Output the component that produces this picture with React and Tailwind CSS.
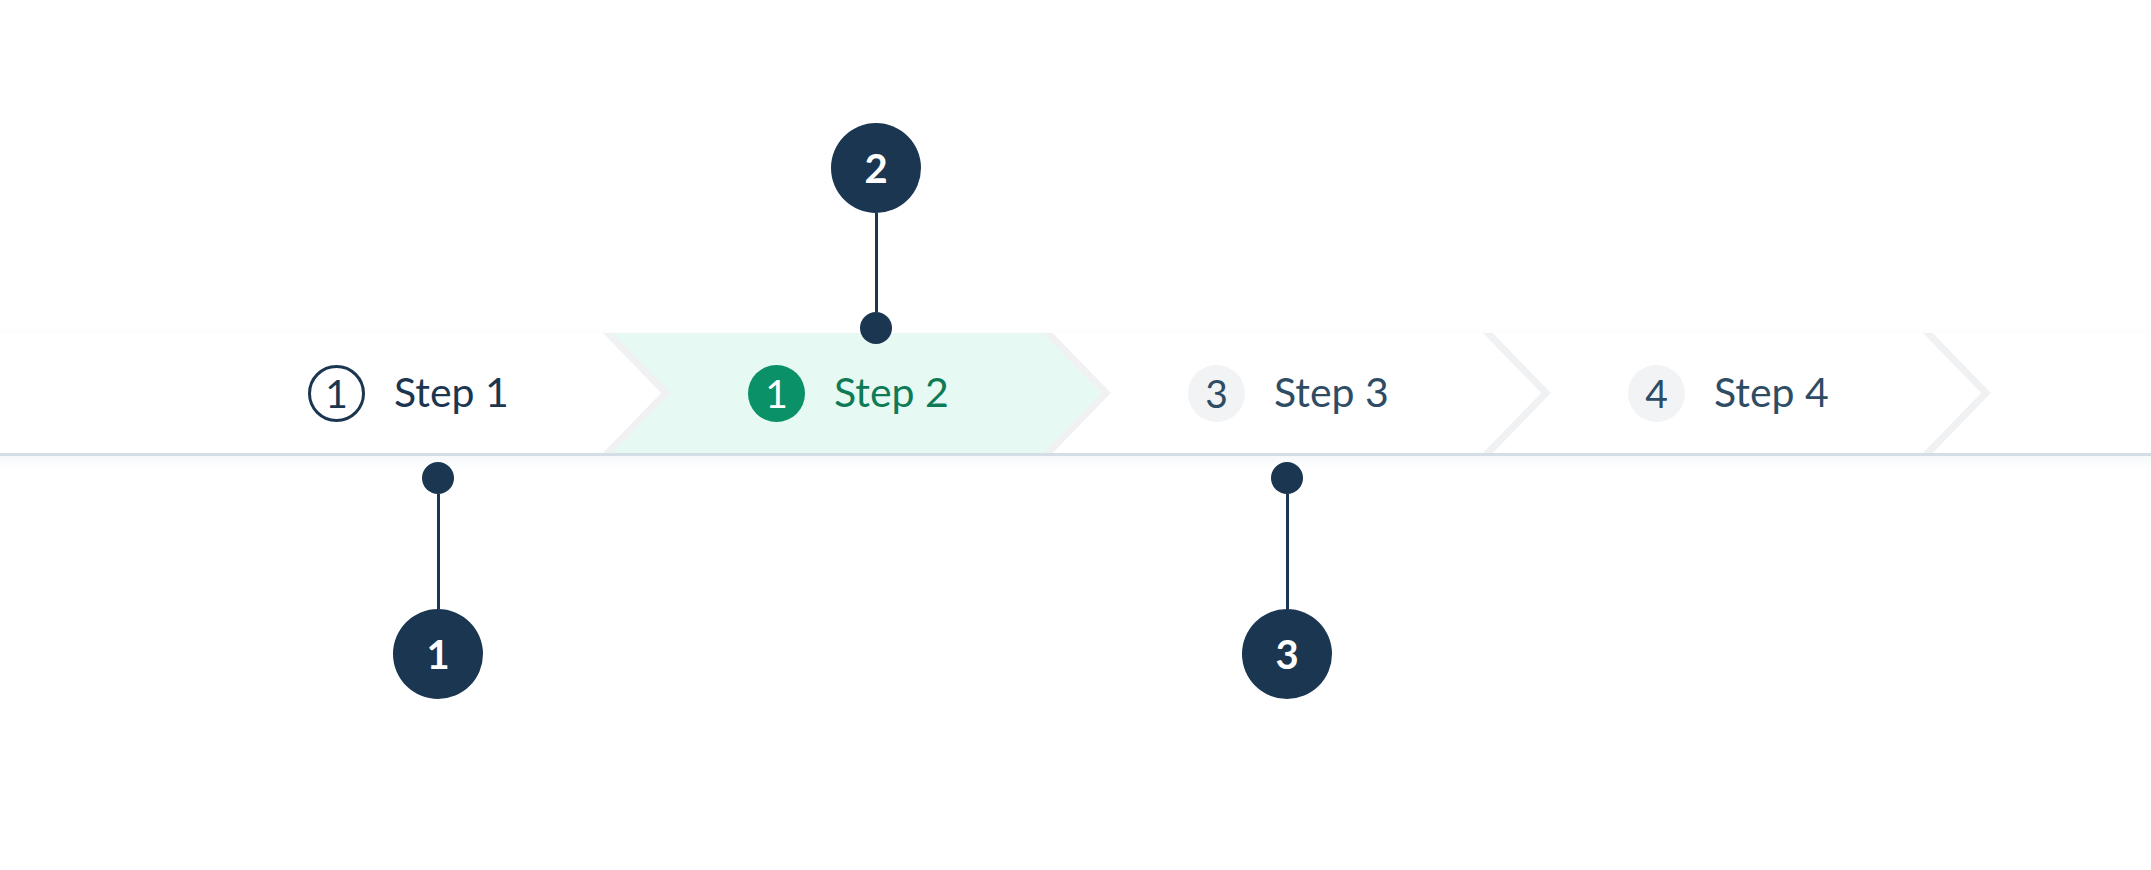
import React from "react";

const steps = [
  { num: 1, label: "Step 1", state: "done" },
  { num: 1, label: "Step 2", state: "active" },
  { num: 3, label: "Step 3", state: "todo" },
  { num: 4, label: "Step 4", state: "todo" },
];

function StepBadge({ num, state }) {
  if (state === "done") {
    return (
      <div className="flex h-[57px] w-[57px] items-center justify-center rounded-full border-[3px] border-[#1b3650] text-[39px] leading-none text-[#1b3650]">
        {num}
      </div>
    );
  }
  if (state === "active") {
    return (
      <div className="flex h-[57px] w-[57px] items-center justify-center rounded-full bg-[#0b9168] text-[39px] leading-none text-white">
        {num}
      </div>
    );
  }
  return (
    <div className="flex h-[57px] w-[57px] items-center justify-center rounded-full bg-[#f1f3f5] text-[39px] leading-none text-[#2e4c64]">
      {num}
    </div>
  );
}

function Step({ step }) {
  const textColor =
    step.state === "done"
      ? "text-[#1b3650]"
      : step.state === "active"
      ? "text-[#0e7b56]"
      : "text-[#2e4c64]";

  return (
    <div className="relative flex h-full w-[440px] shrink-0 items-center pl-[145px]">
      {step.state === "active" && (
        <svg
          className="absolute left-0 top-0 z-0"
          width="510"
          height="120"
          viewBox="0 0 510 120"
        >
          <polygon
            points="5,0 445,0 503,60 445,120 5,120 63,60"
            fill="#e6f9f2"
          />
        </svg>
      )}
      <svg
        className="absolute left-[440px] top-0 z-10"
        width="72"
        height="120"
        viewBox="0 0 72 120"
      >
        <polyline
          points="0,-5 63,60 0,125"
          fill="none"
          stroke="#eff1f3"
          strokeWidth="7"
          strokeLinejoin="miter"
        />
      </svg>
      <div className="relative z-20 flex items-center gap-[29px]">
        <StepBadge num={step.num} state={step.state} />
        <span className={`-mt-[2px] text-[41px] ${textColor}`}>{step.label}</span>
      </div>
    </div>
  );
}

function Callout({ num, up, className, lineH }) {
  const big = (
    <div className="flex h-[90px] w-[90px] items-center justify-center rounded-full bg-[#1b3650] text-[40px] font-bold leading-none text-white">
      {num}
    </div>
  );
  const dot = <div className="h-[32px] w-[32px] rounded-full bg-[#1b3650]" />;
  const line = <div className={`w-[3px] bg-[#1b3650] ${lineH}`} />;

  return (
    <div className={`absolute z-30 flex w-[90px] flex-col items-center ${className}`}>
      {up ? (
        <>
          {big}
          {line}
          {dot}
        </>
      ) : (
        <>
          {dot}
          {line}
          {big}
        </>
      )}
    </div>
  );
}

export default function App() {
  return (
    <div
      className="relative h-[870px] w-full overflow-hidden bg-white pt-[333px]"
      style={{ fontFamily: "Lato, 'Open Sans', sans-serif" }}
    >
      <div className="border-b-[3px] border-[#d5dee6] bg-white shadow-[0_-3px_8px_rgba(0,0,0,0.015)]">
        <div className="mx-auto flex h-[120px] w-[1825px]">
          {steps.map((s, i) => (
            <Step key={i} step={s} />
          ))}
        </div>
      </div>
      <div className="h-[12px] bg-gradient-to-b from-[#f6f8fa] to-white" />

      <Callout num={2} up className="left-[831px] top-[123px]" lineH="h-[99px]" />
      <Callout num={1} className="left-[393px] top-[462px]" lineH="h-[115px]" />
      <Callout num={3} className="left-[1242px] top-[462px]" lineH="h-[115px]" />
    </div>
  );
}
